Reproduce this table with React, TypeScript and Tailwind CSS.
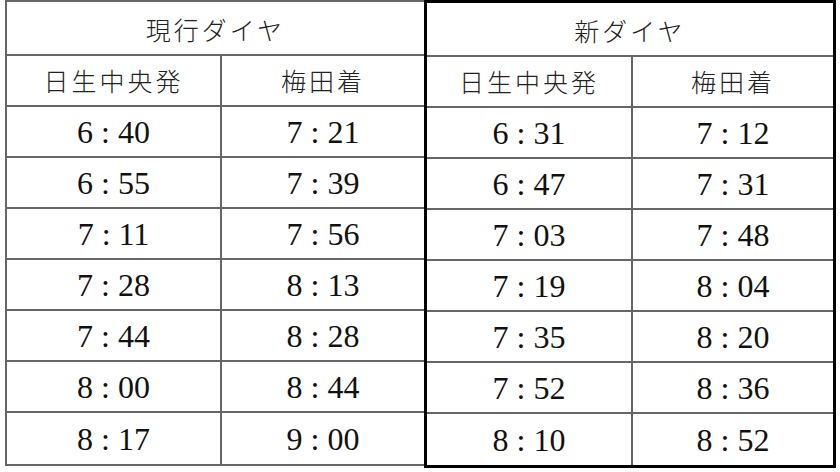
const current = [
  ["6 : 40", "7 : 21"],
  ["6 : 55", "7 : 39"],
  ["7 : 11", "7 : 56"],
  ["7 : 28", "8 : 13"],
  ["7 : 44", "8 : 28"],
  ["8 : 00", "8 : 44"],
  ["8 : 17", "9 : 00"],
]

const next = [
  ["6 : 31", "7 : 12"],
  ["6 : 47", "7 : 31"],
  ["7 : 03", "7 : 48"],
  ["7 : 19", "8 : 04"],
  ["7 : 35", "8 : 20"],
  ["7 : 52", "8 : 36"],
  ["8 : 10", "8 : 52"],
]

const jp = "font-[Noto_Sans_CJK_JP,sans-serif] font-light text-[25px] tracking-[3px] text-[#222]"
const num = "font-[Liberation_Serif,serif] text-[32px] text-[#111]"

function Block({ title, rows, cols, className }: { title: string; rows: string[][]; cols: string; className: string }) {
  return (
    <div className={className}>
      <div className={`h-[54px] border-b-2 border-[#666] flex items-center justify-center pt-[4px] ${jp}`}>{title}</div>
      <div className={`grid ${cols} h-[51px] border-b-2 border-[#666]`}>
        <div className={`border-r-2 border-[#666] flex items-center justify-center ${jp}`}>日生中央発</div>
        <div className={`flex items-center justify-center ${jp}`}>梅田着</div>
      </div>
      {rows.map((r, i) => (
        <div key={i} className={`grid ${cols} h-[51px] ${i < rows.length - 1 ? "border-b-2 border-[#666]" : ""}`}>
          <div className={`border-r-2 border-[#666] flex items-center justify-center ${num}`}>{r[0]}</div>
          <div className={`flex items-center justify-center ${num}`}>{r[1]}</div>
        </div>
      ))}
    </div>
  )
}

export default function App() {
  return (
    <div className="w-[840px] h-[472px] bg-white flex items-start pl-[5px]">
      <Block
        title="現行ダイヤ"
        rows={current}
        cols="grid-cols-[215px_1fr]"
        className="w-[419px] border-l-2 border-t-2 border-b-2 border-[#666]"
      />
      <Block
        title="新ダイヤ"
        rows={next}
        cols="grid-cols-[206px_1fr]"
        className="w-[412px] border-[3px] border-black"
      />
    </div>
  )
}
